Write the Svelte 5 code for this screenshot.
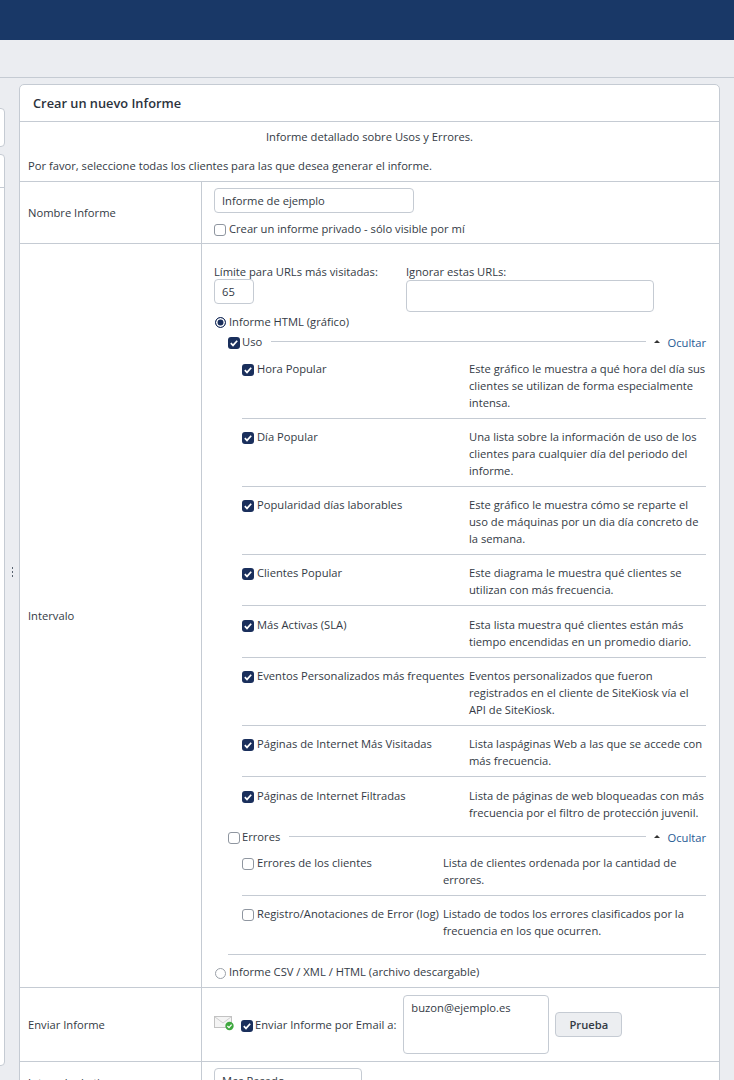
<script>
  const uso = [
    ['Hora Popular', 'Este gráfico le muestra a qué hora del día sus clientes se utilizan de forma especialmente intensa.'],
    ['Día Popular', 'Una lista sobre la información de uso de los clientes para cualquier día del periodo del informe.'],
    ['Popularidad días laborables', 'Este gráfico le muestra cómo se reparte el uso de máquinas por un dia día concreto de la semana.'],
    ['Clientes Popular', 'Este diagrama le muestra qué clientes se utilizan con más frecuencia.'],
    ['Más Activas (SLA)', 'Esta lista muestra qué clientes están más tiempo encendidas en un promedio diario.'],
    ['Eventos Personalizados más frequentes', 'Eventos personalizados que fueron registrados en el cliente de SiteKiosk vía el API de SiteKiosk.'],
    ['Páginas de Internet Más Visitadas', 'Lista laspáginas Web a las que se accede con más frecuencia.'],
    ['Páginas de Internet Filtradas', 'Lista de páginas de web bloqueadas con más frecuencia por el filtro de protección juvenil.']
  ];
  const errores = [
    ['Errores de los clientes', 'Lista de clientes ordenada por la cantidad de errores.'],
    ['Registro/Anotaciones de Error (log)', 'Listado de todos los errores clasificados por la frecuencia en los que ocurren.']
  ];
</script>

{#snippet check(on)}
  <span class="cb" class:on>
    {#if on}
      <svg viewBox="0 0 12 12" width="12" height="12"><path d="M2.8 6.2 5 8.4 9.2 3.8" fill="none" stroke="#fff" stroke-width="1.7"/></svg>
    {/if}
  </span>
{/snippet}

{#snippet ocultar()}
  <span class="hide"><span class="tri"></span>Ocultar</span>
{/snippet}

<div class="page">
  <header class="top"></header>
  <div class="band"></div>
  <div class="main">
    <aside class="side">
      <div class="stub one"></div>
      <div class="stub two"><div class="stub-line"></div></div>
    </aside>
    <div class="gutter"><span></span><span></span><span></span></div>
    <section class="panel">
      <h2>Crear un nuevo Informe</h2>
      <div class="intro">
        <p class="center">Informe detallado sobre Usos y Errores.</p>
        <p>Por favor, seleccione todas los clientes para las que desea generar el informe.</p>
      </div>

      <div class="row r-name">
        <div class="lab">Nombre Informe</div>
        <div class="val">
          <div class="input name">Informe de ejemplo</div>
          <label class="opt private">{@render check(false)}Crear un informe privado - sólo visible por mí</label>
        </div>
      </div>

      <div class="row r-int">
        <div class="lab">Intervalo</div>
        <div class="val">
          <div class="limits">
            <div class="lim-a">
              <div>Límite para URLs más visitadas:</div>
              <div class="input num">65</div>
            </div>
            <div class="lim-b">
              <div>Ignorar estas URLs:</div>
              <div class="input urls"></div>
            </div>
          </div>
          <label class="opt radio-row"><span class="radio on"></span>Informe HTML (gráfico)</label>

          <div class="group">
            <div class="ghead">
              <label class="opt">{@render check(true)}Uso</label>
              <span class="gline"></span>
              {@render ocultar()}
            </div>
            <div class="items uso">
              {#each uso as [name, desc]}
                <div class="item">
                  <label class="opt">{@render check(true)}{name}</label>
                  <div class="desc">{desc}</div>
                </div>
              {/each}
            </div>
          </div>

          <div class="group err">
            <div class="ghead">
              <label class="opt">{@render check(false)}Errores</label>
              <span class="gline"></span>
              {@render ocultar()}
            </div>
            <div class="items errs">
              {#each errores as [name, desc]}
                <div class="item">
                  <label class="opt">{@render check(false)}{name}</label>
                  <div class="desc">{desc}</div>
                </div>
              {/each}
            </div>
          </div>

          <label class="opt radio-row csv"><span class="radio"></span>Informe CSV / XML / HTML (archivo descargable)</label>
        </div>
      </div>

      <div class="row r-send">
        <div class="lab">Enviar Informe</div>
        <div class="val send">
          <svg class="mail" viewBox="0 0 21 16" width="21" height="16">
            <rect x="0.5" y="1.5" width="17" height="11" fill="#f4f4f4" stroke="#c2c2c2"/>
            <path d="M1 2 9 8 17 2" fill="none" stroke="#cfcfcf"/>
            <circle cx="15.5" cy="11" r="4.2" fill="#3fa83f"/>
            <path d="M13.4 11 15 12.6 17.6 9.6" fill="none" stroke="#fff" stroke-width="1.3"/>
          </svg>
          <label class="opt tight">{@render check(true)}Enviar Informe por Email a:</label>
          <div class="input mailbox">buzon@ejemplo.es</div>
          <button>Prueba</button>
        </div>
      </div>

      <div class="row r-time">
        <div class="lab">Intervalo de tiempo</div>
        <div class="val">
          <div class="input sel">Mes Pasado<span class="caret"></span></div>
        </div>
      </div>
    </section>
  </div>
</div>

<style>
  :global(body) { margin: 0; background: #ebedf1; }
  .page {
    width: 734px; height: 1080px; overflow: hidden; background: #ebedf1;
    font: 11.2px/17px "Open Sans", sans-serif; color: #333a45;
  }
  .top { height: 40px; background: #193867; }
  .band { height: 37px; border-bottom: 1px solid #c5cbd3; }
  .main { display: flex; align-items: flex-start; }
  .side { width: 6px; flex: none; padding-top: 30px; overflow: hidden; }
  .stub { width: 20px; margin-left: -15px; background: #fff; border: 1px solid #c5cbd3; border-radius: 4px; box-sizing: border-box; }
  .stub.one { height: 39px; margin-bottom: 7px; }
  .stub.two { height: 912px; }
  .stub-line { height: 32px; border-bottom: 1px solid #c5cbd3; }
  .gutter { width: 13px; flex: none; height: 988px; display: flex; flex-direction: column; align-items: center; justify-content: center; gap: 2px; }
  .gutter span { width: 1.5px; height: 2px; background: #59636f; }
  .panel {
    width: 701px; flex: none; box-sizing: border-box; margin-top: 6px;
    background: #fff; border: 1px solid #c5cbd3; border-radius: 5px;
  }
  h2 { margin: 0; height: 36px; font-size: 12.8px; line-height: 37px; font-weight: 600; padding-left: 13px; color: #2b323c; border-bottom: 1px solid #c5cbd3; }
  .intro { height: 59px; padding: 6px 8px 0; box-sizing: border-box; }
  p { margin: 0; }
  .intro p + p { margin-top: 12px; }
  .center { text-align: center; }
  .row { display: flex; border-top: 1px solid #c5cbd3; }
  .lab { width: 182px; flex: none; padding-left: 8px; box-sizing: border-box; display: flex; align-items: center; border-right: 1px solid #c5cbd3; }
  .val { flex: 1; min-width: 0; padding-left: 12px; padding-right: 13px; }
  .input { box-sizing: border-box; border: 1px solid #c5cbd3; border-radius: 4px; background: #fff; padding-left: 7px; }
  .opt { display: flex; align-items: center; white-space: nowrap; height: 17px; }
  .cb { width: 12px; height: 12px; flex: none; margin-right: 3px; box-sizing: border-box; border: 1px solid #8f96a0; border-radius: 3px; background: #fff; position: relative; top: 1px; }
  .cb.on { border: 0; background: #1a2f5c; }
  .cb svg { display: block; }
  .ghead .cb, .tight .cb { margin-right: 2px; }
  .radio { width: 11px; height: 11px; flex: none; margin-right: 3px; box-sizing: border-box; border: 1px solid #9aa0a8; border-radius: 50%; background: #fff; position: relative; top: 1px; }
  .radio.on { border: 1px solid #1a2f5c; box-shadow: inset 0 0 0 1.5px #fff; background: #1a2f5c; }
  .csv .radio { top: 2px; }

  .r-name { height: 62px; box-sizing: border-box; }
  .name { width: 200px; height: 25px; line-height: 24px; margin-top: 6px; }
  .private { margin-top: 7px; }

  .limits { display: flex; padding-top: 19px; height: 41px; }
  .lim-a { width: 192px; }
  .num { width: 40px; height: 25px; line-height: 24px; margin-top: -1px; }
  .urls { width: 248px; height: 32px; margin-top: 0; }
  .radio-row { margin-top: 9px; margin-left: 1px; }
  .group { margin-left: 14px; }
  .ghead { display: flex; align-items: center; height: 17px; margin-top: 3px; }
  .gline { flex: 1; height: 1px; background: #c5cbd3; margin: 0 8px 0 9px; }
  .hide { color: #1f5a94; display: flex; align-items: center; position: relative; top: 1px; }
  .tri { width: 0; height: 0; border: 3px solid transparent; border-top: 0; border-bottom: 3px solid #333; margin-right: 7px; position: relative; top: -1px; }
  .items { margin-left: 14px; }
  .item { display: flex; padding: 9px 0 7px; border-bottom: 1px solid #c5cbd3; }
  .item:nth-child(5) { padding-top: 10px; }
  .item:last-child { border-bottom: 0; }
  .uso .item:last-child { padding-top: 10px; }
  .uso .opt { width: 227px; flex: none; }
  .errs .opt { width: 201px; flex: none; }
  .desc { flex: 1; }
  .uso { padding-top: 1px; }
  .group.err { padding-bottom: 8px; border-bottom: 1px solid #c5cbd3; margin-top: -3px; }
  .csv { margin-top: 8px; }

  .r-int .val { height: 743px; box-sizing: border-box; }
  .r-send { height: 74px; box-sizing: border-box; }
  .send { display: flex; align-items: center; }
  .mail { flex: none; margin: -3px 6px 0 0; }
  .mailbox { width: 146px; height: 59px; margin-left: 7px; padding-top: 3px; }
  button { width: 67px; height: 25px; margin-left: 6px; padding: 0; font: 600 11.2px "Open Sans", sans-serif; color: #333a45; background: #eceef1; border: 1px solid #c5cbd3; border-radius: 4px; }
  .r-time { height: 40px; }
  .sel { width: 148px; height: 25px; line-height: 24px; margin-top: 6px; position: relative; }
  .caret { position: absolute; right: 6px; top: 11px; width: 0; height: 0; border: 4px solid transparent; border-bottom: 0; border-top: 4px solid #333; }
</style>
